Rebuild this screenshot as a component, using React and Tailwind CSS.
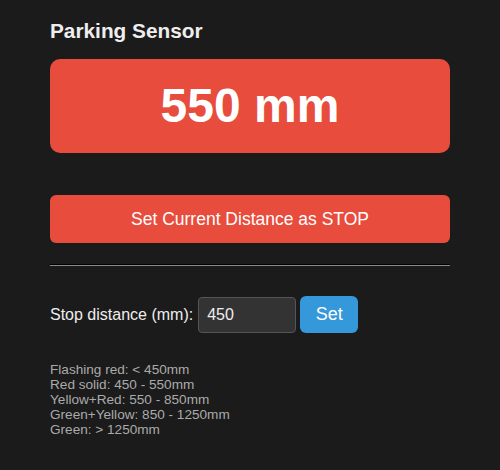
export default function App() {
  const legend = [
    "Flashing red: < 450mm",
    "Red solid: 450 - 550mm",
    "Yellow+Red: 550 - 850mm",
    "Green+Yellow: 850 - 1250mm",
    "Green: > 1250mm",
  ];

  return (
    <div className="min-h-[470px] bg-[#1b1b1b] text-[#eeeeee] font-['Liberation_Sans',Arial,sans-serif]">
      <div className="w-[400px] mx-auto pt-[18px]">
        <h2 className="text-[20.8px] font-bold leading-[26px] text-[#eeeeee]">Parking Sensor</h2>

        <div className="mt-[15px] h-[94px] rounded-[10px] bg-[#e74c3c] flex items-center justify-center">
          <span className="text-[48px] font-bold text-white leading-none">550 mm</span>
        </div>

        <button className="mt-[42px] w-full h-[48px] rounded-[6px] bg-[#e74c3c] text-white text-[17.5px]">
          Set Current Distance as STOP
        </button>

        <div className="mt-[21px] border-t border-t-[#000] border-b border-b-[#8a8a8a]" />

        <div className="mt-[30px] flex items-center">
          <span className="text-[16px] text-[#eeeeee]">Stop distance (mm):</span>
          <input
            type="number"
            defaultValue="450"
            className="ml-[5px] w-[98px] h-[36px] px-[8px] bg-[#333333] border border-[#555555] rounded-[4px] text-[16px] text-[#eeeeee] outline-none [appearance:textfield]"
          />
          <button className="ml-[4px] w-[58px] h-[37px] rounded-[6px] bg-[#3498db] text-white text-[18px]">
            Set
          </button>
        </div>

        <div className="mt-[29px] text-[13.6px] leading-[15px] text-[#aaaaaa]">
          {legend.map((l) => (
            <div key={l}>{l}</div>
          ))}
        </div>
      </div>
    </div>
  );
}
